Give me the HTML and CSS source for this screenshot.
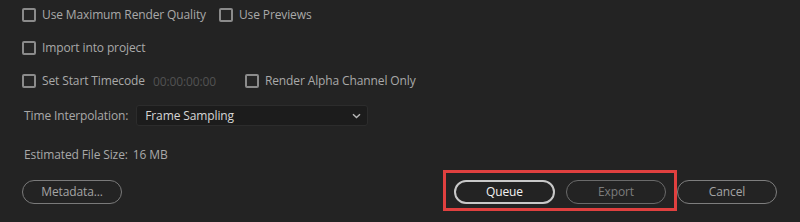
FILE: index.html
```html
<!DOCTYPE html>
<html>
<head>
<meta charset="utf-8">
<link rel="stylesheet" href="styles.css">
</head>
<body>
<div class="panel">
  <div class="row r1">
    <label class="cb"><span class="box"></span><span class="lbl">Use Maximum Render Quality</span></label>
    <label class="cb second"><span class="box"></span><span class="lbl">Use Previews</span></label>
  </div>
  <div class="row r2">
    <label class="cb"><span class="box"></span><span class="lbl">Import into project</span></label>
  </div>
  <div class="row r3">
    <label class="cb"><span class="box"></span><span class="lbl">Set Start Timecode</span></label>
    <span class="tc">00:00:00:00</span>
    <label class="cb alpha"><span class="box"></span><span class="lbl">Render Alpha Channel Only</span></label>
  </div>
  <div class="row r4">
    <span class="lbl">Time Interpolation:</span>
    <div class="select">
      <span class="sel-text">Frame Sampling</span>
      <svg class="chev" width="9" height="6" viewBox="0 0 9 6"><path d="M1 1.2 L4.5 4.6 L8 1.2" fill="none" stroke="#b8b8b8" stroke-width="1.4"/></svg>
    </div>
  </div>
  <div class="row r5">
    <span class="lbl">Estimated File Size:</span><span class="lbl size">16 MB</span>
  </div>
  <div class="row r6">
    <button class="btn meta">Metadata...</button>
    <div class="actions">
      <button class="btn queue">Queue</button>
      <button class="btn export">Export</button>
      <button class="btn cancel">Cancel</button>
      <div class="highlight"></div>
    </div>
  </div>
</div>
</body>
</html>
```
FILE: styles.css
```css
html, body {
  margin: 0;
  padding: 0;
  background: #232323;
}
body {
  width: 800px;
  height: 222px;
  overflow: hidden;
  font-family: "Open Sans", "Noto Sans", sans-serif;
  font-size: 12px;
  letter-spacing: -0.12px;
  color: #a9a9a9;
}
.panel {
  padding: 8px 0 0 22px;
  display: flex;
  flex-direction: column;
}
.row {
  display: flex;
  align-items: center;
}
.r1 { height: 14px; }
.r2 { height: 14px; margin-top: 19px; }
.r3 { height: 14px; margin-top: 19px; }
.r4 { height: 21px; margin-top: 17px; margin-left: 2px; }
.r5 { height: 16px; margin-top: 21px; margin-left: 2px; }
.r6 { height: 24px; margin-top: 17px; }
.cb {
  display: flex;
  align-items: center;
  gap: 6px;
  white-space: nowrap;
}
.box {
  width: 10px;
  height: 10px;
  border: 2px solid #8b8b8b;
  border-radius: 2px;
  background: #262626;
}
.lbl { white-space: nowrap; line-height: 16px; }
.second { margin-left: 13px; }
.tc {
  color: #525252;
  margin-left: 8px;
}
.alpha { margin-left: 29px; }
.select {
  margin-left: 8px;
  width: 216px;
  height: 19px;
  border: 1px solid #2c2c2c;
  border-radius: 3px;
  background: #1c1c1c;
  display: flex;
  align-items: center;
  justify-content: space-between;
  padding: 0 6px 0 8px;
  box-sizing: content-box;
}
.sel-text { color: #d6d6d6; }
.size { margin-left: 5px; }
.btn {
  font-family: inherit;
  font-size: 12px;
  letter-spacing: inherit;
  height: 24px;
  border-radius: 12px;
  background: transparent;
  border: 1px solid #7a7a7a;
  color: #9c9c9c;
  padding: 0;
  line-height: 20px;
}
.meta { width: 100px; color: #a4a4a4; }
.actions {
  position: relative;
  display: flex;
  gap: 11px;
  margin-left: auto;
  margin-right: 23px;
}
.queue {
  width: 101px;
  border: 2px solid #c8c8c8;
  color: #f2f2f2;
}
.export {
  width: 100px;
  border-color: #6a6a6a;
  color: #7c7c7c;
}
.cancel {
  width: 100px;
  border-color: #7e7e7e;
  color: #a4a4a4;
}
.highlight {
  position: absolute;
  left: -11px;
  top: -10px;
  width: 228px;
  height: 35px;
  border: 3px solid #e0403f;
  pointer-events: none;
}
```
